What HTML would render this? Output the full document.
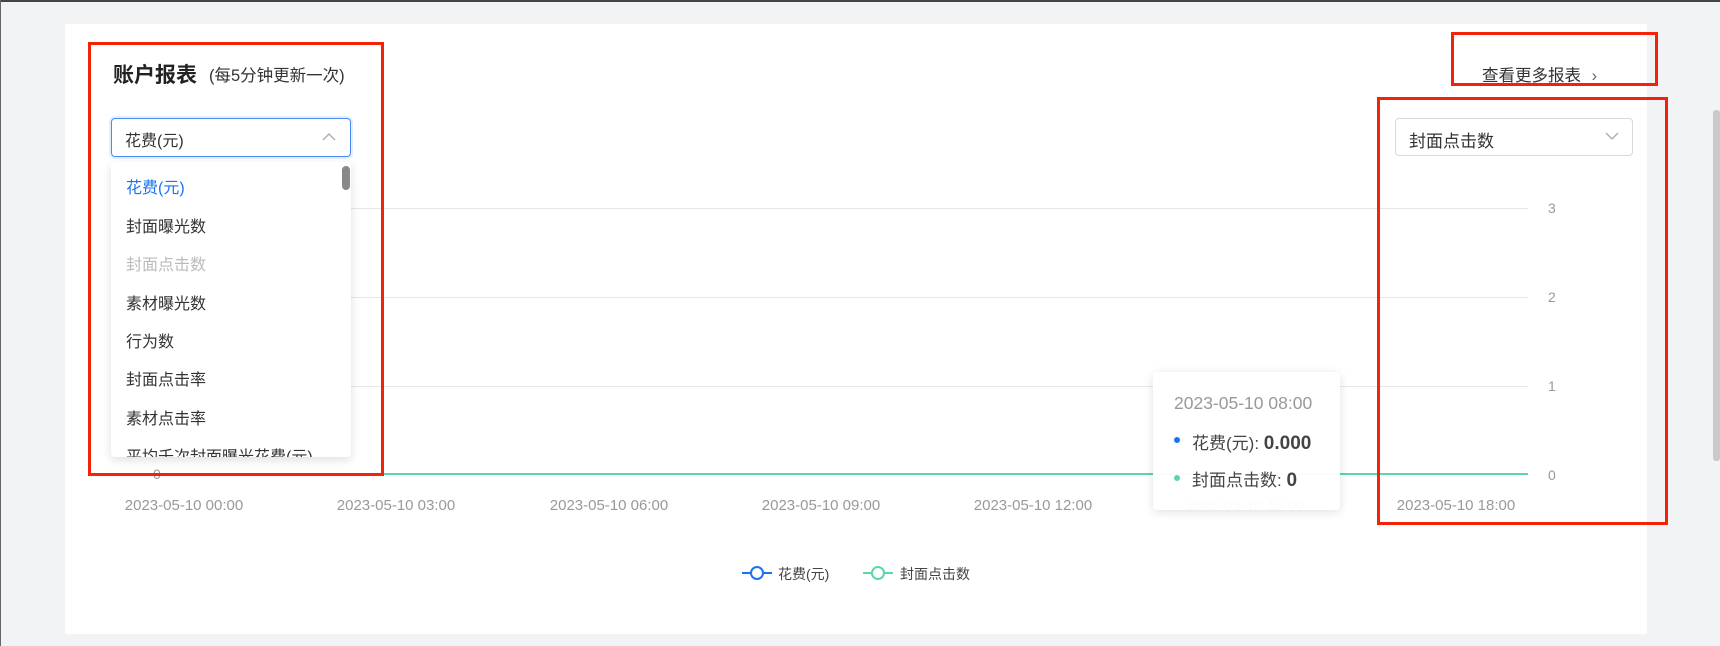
<!DOCTYPE html>
<html><head><meta charset="utf-8"><style>
*{margin:0;padding:0;box-sizing:border-box}
body{width:1720px;height:646px;background:#f2f3f5;position:relative;overflow:hidden;font-family:"Liberation Sans","Noto Sans CJK SC",sans-serif;color:#333}
.a{position:absolute;white-space:nowrap}
.card{position:absolute;left:65px;top:24px;width:1582px;height:610px;background:#fff}
.red{position:absolute;border:3px solid #f5220a}
.grid{position:absolute;left:111px;width:1417px;height:1px;background:#e6e6e6}
.xl{position:absolute;top:497px;font-size:15px;color:#999;transform:translateX(-50%)}
.yl{position:absolute;left:1548px;font-size:14px;color:#999}
.it{position:absolute;left:126px;font-size:16px;color:#333}
</style></head><body>
<div class="a" style="left:0;top:0;width:1720px;height:2px;background:#444"></div>
<div class="a" style="left:0;top:0;width:1px;height:646px;background:#666"></div>
<div class="card"></div>
<div class="a" style="left:1713px;top:110px;width:7px;height:351px;background:#c9c9c9;border-radius:3px"></div>

<div class="grid" style="top:208px"></div>
<div class="grid" style="top:297px"></div>
<div class="grid" style="top:386px"></div>
<div class="a" style="left:164px;top:473px;width:1364px;height:2px;background:#5ad8a6"></div>
<div class="a" style="left:153px;top:466px;font-size:14px;color:#999">0</div>
<div class="yl" style="top:200px">3</div>
<div class="yl" style="top:289px">2</div>
<div class="yl" style="top:378px">1</div>
<div class="yl" style="top:467px">0</div>
<div class="xl" style="left:184px">2023-05-10 00:00</div>
<div class="xl" style="left:396px">2023-05-10 03:00</div>
<div class="xl" style="left:609px">2023-05-10 06:00</div>
<div class="xl" style="left:821px">2023-05-10 09:00</div>
<div class="xl" style="left:1033px">2023-05-10 12:00</div>
<div class="xl" style="left:1245px">2023-05-10 15:00</div>
<div class="xl" style="left:1456px">2023-05-10 18:00</div>

<div class="a" style="left:113px;top:59px;font-size:21px;font-weight:bold;color:#222">账户报表</div>
<div class="a" style="left:209px;top:62px;font-size:16.5px;color:#333">(每5分钟更新一次)</div>

<div class="a" style="left:111px;top:118px;width:240px;height:39px;border:1px solid #4a8af4;border-radius:4px;box-shadow:0 0 0 2px rgba(64,140,255,.15)"></div>
<div class="a" style="left:125px;top:127px;font-size:16px">花费(元)</div>
<svg class="a" style="left:322px;top:132px" width="14" height="9"><path d="M1 8 L7 2 L13 8" fill="none" stroke="#aaa" stroke-width="1.3"/></svg>

<div class="a" style="left:111px;top:162px;width:240px;height:295px;background:#fff;border-radius:4px;box-shadow:0 3px 10px rgba(0,0,0,.13)"></div>
<div class="a" style="left:342px;top:166px;width:8px;height:24px;background:#888;border-radius:4px"></div>
<div class="it" style="top:174px;color:#1a73f0">花费(元)</div>
<div class="it" style="top:213px">封面曝光数</div>
<div class="it" style="top:251px;color:#bbb">封面点击数</div>
<div class="it" style="top:290px">素材曝光数</div>
<div class="it" style="top:328px">行为数</div>
<div class="it" style="top:366px">封面点击率</div>
<div class="it" style="top:405px">素材点击率</div>
<div class="a" style="left:111px;top:440px;width:240px;height:17px;overflow:hidden"><div class="it" style="left:15px;top:3px">平均千次封面曝光花费(元)</div></div>

<div class="a" style="left:1482px;top:62px;font-size:16.5px;color:#333">查看更多报表 <span style="color:#666;margin-left:6px">›</span></div>

<div class="a" style="left:1395px;top:118px;width:238px;height:38px;border:1px solid #d9d9d9;border-radius:4px"></div>
<div class="a" style="left:1409px;top:127px;font-size:17px">封面点击数</div>
<svg class="a" style="left:1605px;top:132px" width="14" height="9"><path d="M1 1 L7 7 L13 1" fill="none" stroke="#aaa" stroke-width="1.3"/></svg>

<div class="a" style="left:1153px;top:372px;width:187px;height:138px;background:rgba(255,255,255,.96);border-radius:4px;box-shadow:0 2px 10px rgba(0,0,0,.12)"></div>
<div class="a" style="left:1174px;top:393px;font-size:17.5px;color:#999">2023-05-10 08:00</div>
<div class="a" style="left:1174px;top:437px;width:6px;height:6px;border-radius:50%;background:#1a73f0"></div>
<div class="a" style="left:1192px;top:429px;font-size:17px;color:#444">花费(元): <b style="font-size:19px">0.000</b></div>
<div class="a" style="left:1174px;top:475px;width:6px;height:6px;border-radius:50%;background:#5ad8a6"></div>
<div class="a" style="left:1192px;top:466px;font-size:17px;color:#444">封面点击数: <b style="font-size:19px">0</b></div>

<svg class="a" style="left:742px;top:565px" width="30" height="16"><line x1="0" y1="8" x2="30" y2="8" stroke="#1a73f0" stroke-width="2"/><circle cx="15" cy="8" r="6" fill="#fff" stroke="#1a73f0" stroke-width="2"/></svg>
<div class="a" style="left:778px;top:564px;font-size:14px;color:#444">花费(元)</div>
<svg class="a" style="left:863px;top:565px" width="30" height="16"><line x1="0" y1="8" x2="30" y2="8" stroke="#5ad8a6" stroke-width="2"/><circle cx="15" cy="8" r="6" fill="#fff" stroke="#5ad8a6" stroke-width="2"/></svg>
<div class="a" style="left:900px;top:564px;font-size:14px;color:#444">封面点击数</div>

<div class="red" style="left:88px;top:42px;width:296px;height:434px"></div>
<div class="red" style="left:1451px;top:32px;width:207px;height:54px"></div>
<div class="red" style="left:1377px;top:97px;width:291px;height:428px"></div>
</body></html>
